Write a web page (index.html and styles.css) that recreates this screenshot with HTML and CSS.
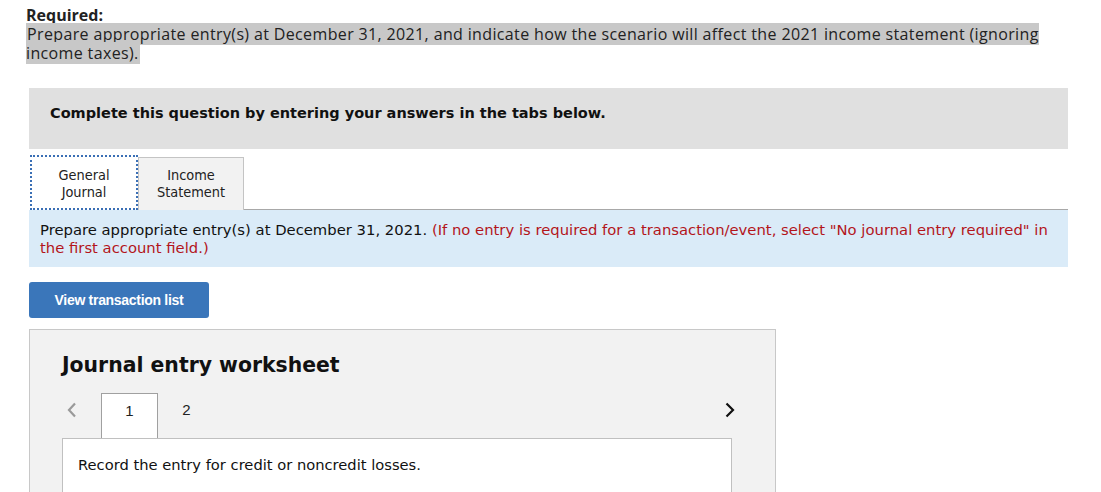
FILE: index.html
```html
<!DOCTYPE html>
<html>
<head>
<meta charset="utf-8">
<link rel="stylesheet" href="styles.css">
</head>
<body>
<div class="req">
  <div class="req-title">Required:</div>
  <div class="req-text"><span class="sel">Prepare appropriate entry(s) at December 31, 2021, and indicate how the scenario will affect the 2021 income statement (ignoring<br>income taxes).</span></div>
</div>
<div class="main">
  <div class="banner">Complete this question by entering your answers in the tabs below.</div>
  <div class="tabs">
    <div class="tab active">General<br>Journal</div>
    <div class="tab">Income<br>Statement</div>
    <div class="tab-fill"></div>
  </div>
  <div class="instr">Prepare appropriate entry(s) at December 31, 2021. <span class="red">(If no entry is required for a transaction/event, select "No journal entry required" in the first account field.)</span></div>
  <button class="btn">View transaction list</button>
  <div class="panel">
    <h2 class="ptitle">Journal entry worksheet</h2>
    <div class="steps">
      <span class="chev left"><svg width="12" height="16" viewBox="0 0 12 16"><path d="M9 1.5 L3 8 L9 14.5" fill="none" stroke="#9a9a9a" stroke-width="2.2"/></svg></span>
      <div class="step active">1</div>
      <div class="step">2</div>
      <div class="step-fill"></div>
      <span class="chev right"><svg width="12" height="16" viewBox="0 0 12 16"><path d="M2.5 1.5 L9 8 L2.5 14.5" fill="none" stroke="#111" stroke-width="2.2"/></svg></span>
    </div>
    <div class="content">Record the entry for credit or noncredit losses.</div>
  </div>
</div>
</body>
</html>
```
FILE: styles.css
```css
html, body { margin: 0; padding: 0; background: #fff; }
body { width: 1101px; height: 492px; overflow: hidden; }

.req { padding: 6px 0 0 26px; font-family: "Open Sans", "Liberation Sans", sans-serif; font-size: 16px; color: #222; line-height: 19px; }
.req-title { font-weight: 700; }
.req-text { width: 1070px; letter-spacing: 0.36px; }
.sel { background: #c8c8c8; padding: 0 1px; }

.main { margin: 25px 0 0 29px; width: 1039px; }
.banner { background: #e0e0e0; height: 61px; box-sizing: border-box; padding: 16px 0 0 21px; font-family: "DejaVu Sans", Verdana, sans-serif; font-weight: bold; font-size: 14.5px; color: #111; line-height: 19px; }

.tabs { display: flex; margin-top: 6px; height: 55px; align-items: flex-end; }
.tab { box-sizing: border-box; height: 53px; width: 106px; background: #f2f2f2; border: 1px solid #c4c4c4; border-bottom: none; font-family: "DejaVu Sans Condensed", Tahoma, sans-serif; font-size: 14.4px; line-height: 17px; color: #222; text-align: center; padding-top: 9px; }
.tab.active { height: 55px; width: 108px; background: #fff; border: 2px dotted #3a6fb5; margin-left: 1px; padding-top: 10px; }
.tab-fill { flex: 1; border-bottom: 1px solid #a8a8a8; }

.instr { background: #daebf8; padding: 11px 11px 9px 11px; font-family: "DejaVu Sans", Verdana, sans-serif; font-size: 14.8px; line-height: 18px; color: #111; height: 57px; box-sizing: border-box; }
.red { color: #b3151b; }

.btn { display: block; margin-top: 15px; width: 180px; height: 36px; border: none; border-radius: 3px; background: #3a76ba; color: #fff; font-family: "Liberation Sans", Arial, sans-serif; font-weight: bold; font-size: 14px; letter-spacing: -0.3px; padding: 0; }

.panel { margin-top: 11px; width: 747px; box-sizing: border-box; height: 170px; background: #f2f2f2; border: 1px solid #c8c8c8; padding: 0 43px 0 32px; }
.ptitle { margin: 22px 0 0 0; font-family: "DejaVu Sans", Verdana, sans-serif; font-weight: bold; font-size: 20.4px; line-height: 26px; color: #111; }
.steps { display: flex; align-items: flex-end; margin-top: 15px; height: 45px; }
.chev { align-self: flex-start; height: 16px; margin-top: 9px; }
.chev.left { width: 39px; padding-left: 4px; box-sizing: border-box; }
.chev.right { width: 12px; margin-right: -4px; }
.step { width: 57px; height: 45px; box-sizing: border-box; text-align: center; padding-top: 8px; font-family: "Liberation Sans", Arial, sans-serif; font-size: 15px; color: #222; }
.step.active { background: #fff; border: 1px solid #a0a0a0; border-bottom: none; height: 45px; }
.step-fill { flex: 1; }
.content { background: #fff; border: 1px solid #c0c0c0; border-bottom: none; height: 60px; padding: 17px 15px; box-sizing: border-box; font-family: "DejaVu Sans", Verdana, sans-serif; font-size: 14.7px; color: #111; }
```
